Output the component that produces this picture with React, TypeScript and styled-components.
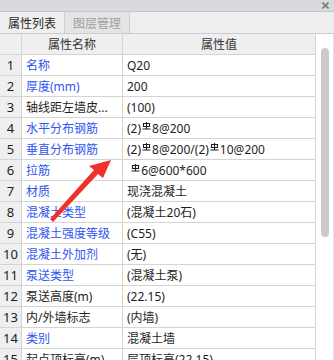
import React from 'react';
import styled, { createGlobalStyle } from 'styled-components';

const Global = createGlobalStyle`
  html, body {
    margin: 0;
    padding: 0;
    background: #fff;
  }
  body {
    font-family: "Noto Sans", "Noto Sans CJK SC", sans-serif;
  }
`;

const Panel = styled.div`
  position: relative;
  width: 334px;
  height: 360px;
  overflow: hidden;
  display: flex;
  flex-direction: column;
  background: #fff;
`;

const TitleStrip = styled.div`
  height: 11px;
  flex: none;
  background: #d9dadf;
  border-bottom: 1px solid #c4c7ce;
  display: flex;
  justify-content: flex-end;
  align-items: center;
  padding-right: 5px;
  svg {
    display: block;
  }
`;

const TabBar = styled.div`
  height: 21px;
  flex: none;
  display: flex;
  background: #eeeeee;
  border-bottom: 1px solid #c9ccd2;
`;

const Tab = styled.div<{ $active?: boolean }>`
  width: 64px;
  display: flex;
  align-items: center;
  justify-content: center;
  font-size: 12px;
  color: ${(p) => (p.$active ? '#2a2a2a' : '#a0a0a0')};
  background: ${(p) => (p.$active ? '#efefef' : '#e4e4e4')};
  border-right: 1px solid #cfcfcf;
`;

const Body = styled.div`
  flex: 1;
  display: flex;
  min-height: 0;
`;

const Grid = styled.div`
  flex: 1;
  display: grid;
  grid-template-columns: 22px 101px 1fr;
  grid-auto-rows: 21px;
  align-content: start;
  border-right: 1px solid #d4d4d4;
`;

const Cell = styled.div<{ $kind?: 'head' | 'num' | 'name' | 'value'; $link?: boolean }>`
  box-sizing: border-box;
  border-right: 1px solid #d4d4d4;
  border-bottom: 1px solid #d4d4d4;
  display: flex;
  align-items: center;
  white-space: nowrap;
  overflow: hidden;
  background: ${(p) => (p.$kind === 'head' || p.$kind === 'num' ? '#efefef' : '#fff')};
  justify-content: ${(p) => (p.$kind === 'head' || p.$kind === 'num' ? 'center' : 'flex-start')};
  padding-left: ${(p) => (p.$kind === 'name' || p.$kind === 'value' ? '4px' : '0')};
  font-size: ${(p) => (p.$kind === 'num' ? '13px' : '12px')};
  color: ${(p) => (p.$kind === 'head' ? '#333' : p.$link ? '#2f55f0' : '#1e1e1e')};
`;

const ValueCell = styled(Cell)`
  border-right: none;
`;

const Scrollbar = styled.div`
  width: 17px;
  flex: none;
  background: #fff;
  border-right: 1px solid #e2e2e2;
  display: flex;
  justify-content: center;
  padding-top: 14px;
`;

const Thumb = styled.div`
  width: 8px;
  height: 189px;
  border-radius: 4px;
  background: #cbcbcb;
`;

const Rebar = styled.svg`
  width: 9px;
  height: 8px;
  margin: 4px 1px 0 1px;
  align-self: flex-start;
`;

const ArrowLayer = styled.svg`
  position: absolute;
  left: 0;
  top: 0;
  pointer-events: none;
`;

const RebarIcon = () => (
  <Rebar viewBox="0 0 9 8">
    <path d="M1.5 1.5h6v3h-6z M4.5 0v7.5 M0.5 7h8" fill="none" stroke="#1e1e1e" strokeWidth="1.1" />
  </Rebar>
);

const R = '\u0001';

const renderValue = (text: string) =>
  text.split(R).map((part, i) => (
    <React.Fragment key={i}>
      {i > 0 && <RebarIcon />}
      {part}
    </React.Fragment>
  ));

type Row = { name: string; value: string; link: boolean };

const rows: Row[] = [
  { name: '名称', value: 'Q20', link: true },
  { name: '厚度(mm)', value: '200', link: true },
  { name: '轴线距左墙皮...', value: '(100)', link: false },
  { name: '水平分布钢筋', value: `(2)${R}8@200`, link: true },
  { name: '垂直分布钢筋', value: `(2)${R}8@200/(2)${R}10@200`, link: true },
  { name: '拉筋', value: `\u00a0${R}6@600*600`, link: true },
  { name: '材质', value: '现浇混凝土', link: true },
  { name: '混凝土类型', value: '(混凝土20石)', link: true },
  { name: '混凝土强度等级', value: '(C55)', link: true },
  { name: '混凝土外加剂', value: '(无)', link: true },
  { name: '泵送类型', value: '(混凝土泵)', link: true },
  { name: '泵送高度(m)', value: '(22.15)', link: false },
  { name: '内/外墙标志', value: '(内墙)', link: false },
  { name: '类别', value: '混凝土墙', link: true },
  { name: '起点顶标高(m)', value: '层顶标高(22.15)', link: false },
];

export default function App() {
  return (
    <Panel>
      <Global />
      <TitleStrip>
        <svg width="7" height="7" viewBox="0 0 7 7">
          <path d="M0.5 0.5l6 6M6.5 0.5l-6 6" stroke="#7a7a7a" strokeWidth="1.6" />
        </svg>
      </TitleStrip>
      <TabBar>
        <Tab $active>属性列表</Tab>
        <Tab>图层管理</Tab>
      </TabBar>
      <Body>
        <Grid>
          <Cell $kind="head" />
          <Cell $kind="head">属性名称</Cell>
          <ValueCell $kind="head">属性值</ValueCell>
          {rows.map((r, i) => (
            <React.Fragment key={i}>
              <Cell $kind="num">{i + 1}</Cell>
              <Cell $kind="name" $link={r.link}>{r.name}</Cell>
              <ValueCell $kind="value">{renderValue(r.value)}</ValueCell>
            </React.Fragment>
          ))}
        </Grid>
        <Scrollbar>
          <Thumb />
        </Scrollbar>
      </Body>
      <ArrowLayer width="334" height="360" viewBox="0 0 334 360">
        <polygon points="50,219 94,170 89,166 111,160 103,178 98,174 53,222" fill="#f0302a" />
      </ArrowLayer>
    </Panel>
  );
}
